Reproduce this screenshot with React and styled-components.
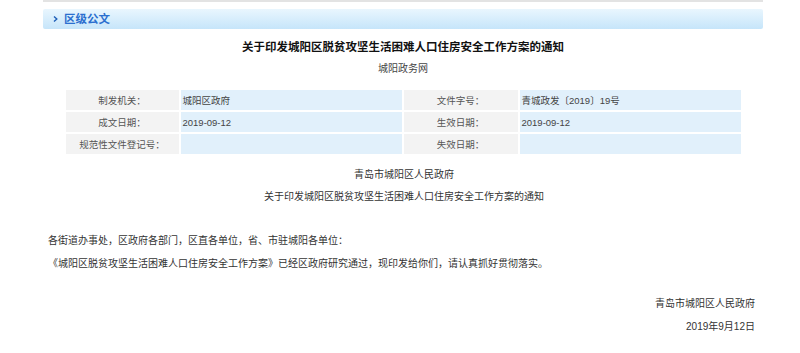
import React from 'react';
import styled, { createGlobalStyle } from 'styled-components';

const GlobalStyle = createGlobalStyle`
  body {
    margin: 0;
    background: #ffffff;
    font-family: "Liberation Sans", "Noto Sans CJK SC", sans-serif;
    color: #333;
  }
`;

const Page = styled.div`
  width: 720px;
  margin-left: 43px;
`;

const TopBar = styled.div`
  height: 2px;
  background: #e3e3e3;
`;

const Header = styled.div`
  margin-top: 7px;
  height: 20px;
  display: flex;
  align-items: center;
  padding-left: 10px;
  gap: 6px;
  background: linear-gradient(to bottom, #e9f6fe, #c6e5fa);
  border-radius: 2px;
`;

const HeaderTitle = styled.h2`
  margin: 0;
  font-size: 11.5px;
  font-weight: bold;
  color: #2b6fcf;
  line-height: 20px;
`;

const Title = styled.h1`
  margin: 10px 0 0;
  text-align: center;
  font-size: 11.5px;
  font-weight: bold;
  line-height: 16px;
  color: #111;
`;

const Source = styled.div`
  margin-top: 7px;
  text-align: center;
  font-size: 10px;
  line-height: 14px;
  color: #444;
`;

const InfoGrid = styled.div`
  margin: 14px auto 0;
  width: 675px;
  display: grid;
  grid-template-columns: 113px 221px 114px 221px;
  grid-auto-rows: 20px;
  gap: 2px;
`;

const Cell = styled.div`
  display: flex;
  align-items: center;
  font-size: 9.5px;
  color: ${p => (p.$label ? '#555' : '#444')};
  background: ${p => (p.$label ? '#f3f3f3' : '#e1f0fb')};
  justify-content: ${p => (p.$label ? 'center' : 'flex-start')};
  padding-left: ${p => (p.$label ? '0' : '2px')};
`;

const Body = styled.div`
  margin-top: 10px;
  font-size: 10px;
  color: #333;
`;

const CenterLine = styled.p`
  margin: 0;
  text-align: center;
  line-height: 22px;
  padding-left: 2px;
`;

const Para = styled.p`
  margin: 0;
  padding-left: 5px;
  line-height: 23px;
`;

const Spacer = styled.div`
  height: ${p => p.$h}px;
`;

const Sign = styled.p`
  margin: 0;
  text-align: right;
  padding-right: 8px;
  line-height: 23px;
`;

const Chevron = () => (
  <svg width="5" height="6" viewBox="0 0 5 6">
    <path d="M1 0.5 L3.8 3 L1 5.5" fill="none" stroke="#1f5fb8" strokeWidth="1.4" />
  </svg>
);

const info = [
  ['制发机关：', '城阳区政府', '文件字号：', '青城政发〔2019〕19号'],
  ['成文日期：', '2019-09-12', '生效日期：', '2019-09-12'],
  ['规范性文件登记号：', '', '失效日期：', ''],
];

export default function App() {
  return (
    <Page>
      <GlobalStyle />
      <TopBar />
      <Header>
        <Chevron />
        <HeaderTitle>区级公文</HeaderTitle>
      </Header>
      <Title>关于印发城阳区脱贫攻坚生活困难人口住房安全工作方案的通知</Title>
      <Source>城阳政务网</Source>
      <InfoGrid>
        {info.map((row, i) =>
          row.map((text, j) => (
            <Cell key={`${i}-${j}`} $label={j % 2 === 0}>{text}</Cell>
          ))
        )}
      </InfoGrid>
      <Body>
        <CenterLine>青岛市城阳区人民政府</CenterLine>
        <CenterLine>关于印发城阳区脱贫攻坚生活困难人口住房安全工作方案的通知</CenterLine>
        <Spacer $h={21} />
        <Para>各街道办事处，区政府各部门，区直各单位，省、市驻城阳各单位：</Para>
        <Para>《城阳区脱贫攻坚生活困难人口住房安全工作方案》已经区政府研究通过，现印发给你们，请认真抓好贯彻落实。</Para>
        <Spacer $h={17} />
        <Sign>青岛市城阳区人民政府</Sign>
        <Sign>2019年9月12日</Sign>
      </Body>
    </Page>
  );
}
